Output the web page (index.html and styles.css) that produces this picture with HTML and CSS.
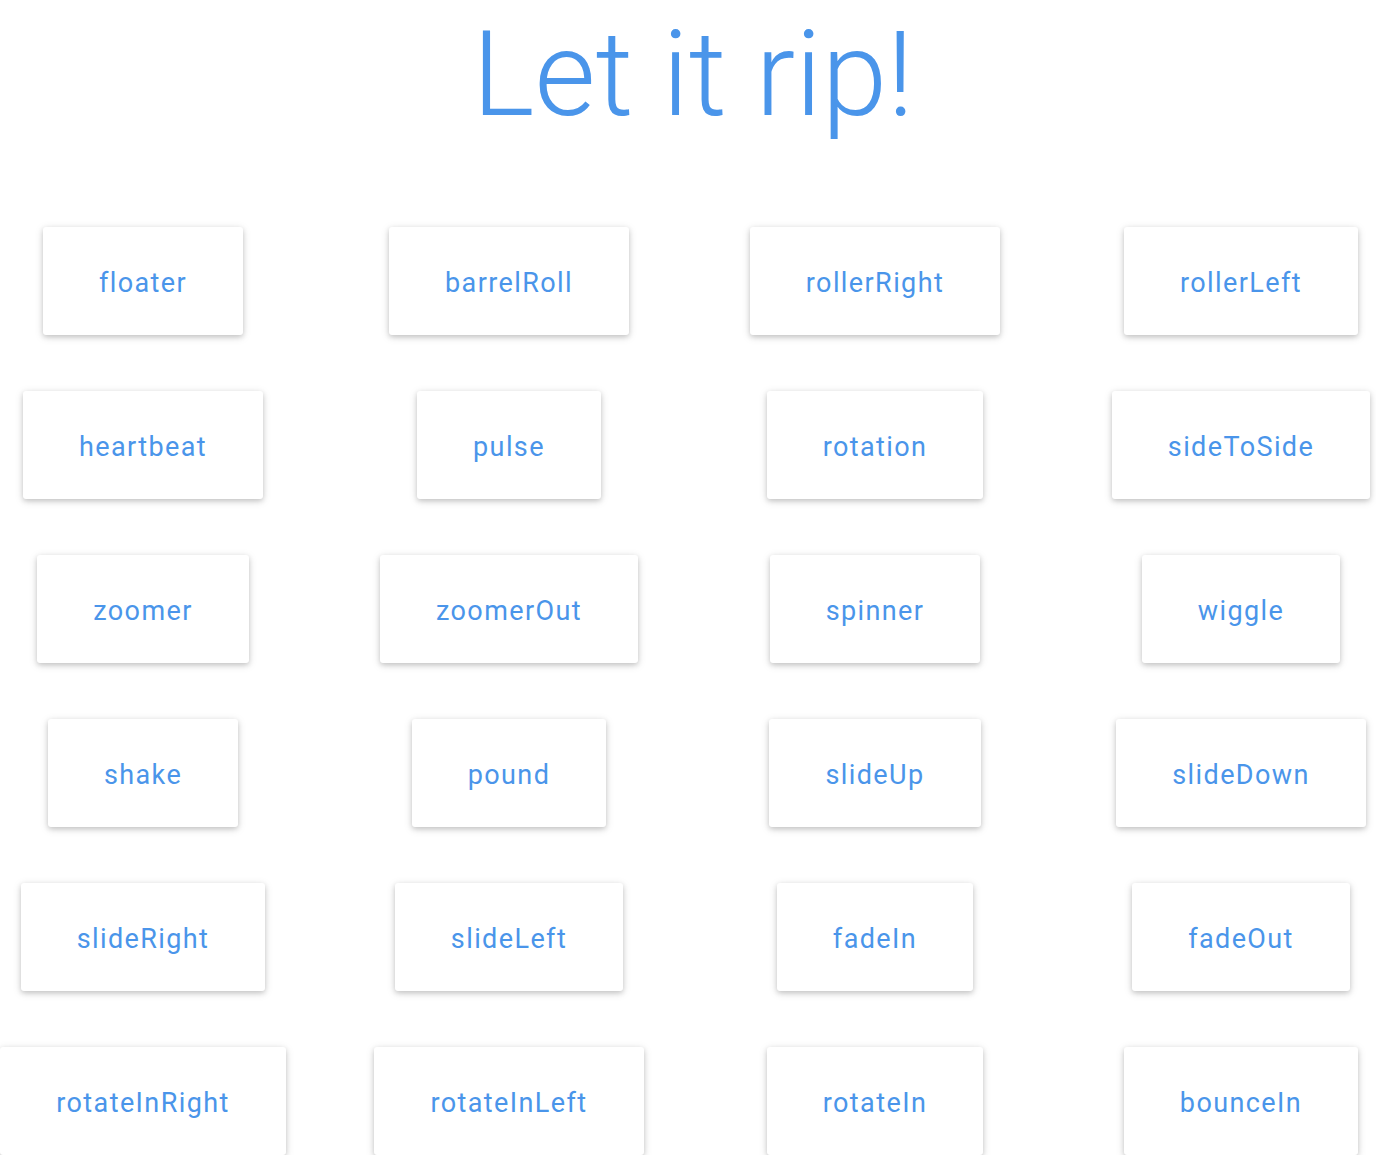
FILE: index.html
```html
<!DOCTYPE html>
<html>
<head>
<meta charset="utf-8">
<link rel="stylesheet" href="styles.css">
</head>
<body>
<h1 class="title">Let it rip!</h1>
<div class="grid">
  <div class="cell"><button class="btn">floater</button></div>
  <div class="cell"><button class="btn">barrelRoll</button></div>
  <div class="cell"><button class="btn">rollerRight</button></div>
  <div class="cell"><button class="btn">rollerLeft</button></div>
  <div class="cell"><button class="btn">heartbeat</button></div>
  <div class="cell"><button class="btn">pulse</button></div>
  <div class="cell"><button class="btn">rotation</button></div>
  <div class="cell"><button class="btn">sideToSide</button></div>
  <div class="cell"><button class="btn">zoomer</button></div>
  <div class="cell"><button class="btn">zoomerOut</button></div>
  <div class="cell"><button class="btn">spinner</button></div>
  <div class="cell"><button class="btn">wiggle</button></div>
  <div class="cell"><button class="btn">shake</button></div>
  <div class="cell"><button class="btn">pound</button></div>
  <div class="cell"><button class="btn">slideUp</button></div>
  <div class="cell"><button class="btn">slideDown</button></div>
  <div class="cell"><button class="btn">slideRight</button></div>
  <div class="cell"><button class="btn">slideLeft</button></div>
  <div class="cell"><button class="btn">fadeIn</button></div>
  <div class="cell"><button class="btn">fadeOut</button></div>
  <div class="cell"><button class="btn">rotateInRight</button></div>
  <div class="cell"><button class="btn">rotateInLeft</button></div>
  <div class="cell"><button class="btn">rotateIn</button></div>
  <div class="cell"><button class="btn">bounceIn</button></div>
</div>
</body>
</html>
```
FILE: styles.css
```css
html, body {
  margin: 0;
  padding: 0;
  background: #ffffff;
  overflow: hidden;
}
body {
  font-family: Roboto, "Liberation Sans", sans-serif;
  color: #4a95ea;
}
.title {
  margin: 0 0 0 10px;
  padding-top: 5.5px;
  font-size: 118px;
  font-weight: 300;
  line-height: normal;
  text-align: center;
  color: #4a95ea;
}
.grid {
  display: grid;
  grid-template-columns: repeat(4, 366px);
  row-gap: 56px;
  margin: 83.5px 0 0 -40px;
}
.cell {
  display: flex;
  justify-content: center;
}
.btn {
  height: 108px;
  padding: 3px 56px 0;
  border: none;
  border-radius: 3px;
  background: #ffffff;
  font-family: Roboto, "Liberation Sans", sans-serif;
  font-size: 27px;
  font-weight: 400;
  letter-spacing: 1.4px;
  color: #4a95ea;
  box-shadow: 0 2px 5px 0 rgba(0,0,0,0.16), 0 2px 10px 0 rgba(0,0,0,0.12);
  cursor: pointer;
}
```
